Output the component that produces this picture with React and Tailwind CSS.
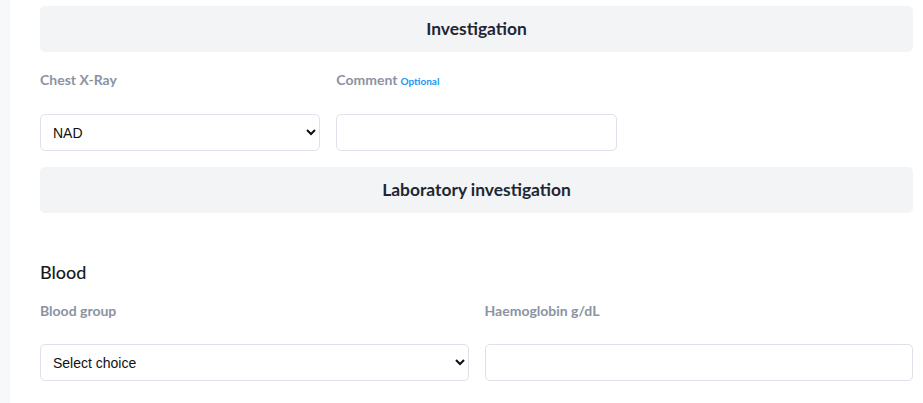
import { useState } from 'react'

const lato = { fontFamily: 'Lato, "Open Sans", sans-serif' }

function SectionHeader({ title }) {
  return (
    <div className="h-[46px] rounded-[5px] bg-[#f3f4f6] flex items-center justify-center">
      <h2 className="text-[17.4px] font-bold text-[#1f2633]" style={lato}>{title}</h2>
    </div>
  )
}

function Label({ children, optional }) {
  return (
    <label className="block h-[20px] leading-[20px] text-[14px] font-bold text-[#8a93a3]" style={lato}>
      {children}
      {optional && <span className="ml-[3px] text-[10px] font-bold text-[#2196f3]">Optional</span>}
    </label>
  )
}

const fieldCls =
  'w-full h-[37px] rounded-[5px] border border-[#dfe1ea] bg-white pl-2 text-[14px] text-[#111] outline-none'

export default function App() {
  const [xray, setXray] = useState('NAD')
  const [comment, setComment] = useState('')
  const [group, setGroup] = useState('')
  const [hb, setHb] = useState('')

  return (
    <div className="min-h-[403px] flex bg-white" style={{ fontFamily: '"Liberation Sans", Arial, sans-serif' }}>
      <div className="w-[10px] shrink-0 bg-[#f7f8fa]" />
      <div className="flex-1 pl-[30px] pr-[10px] pt-[6px]">
        <SectionHeader title="Investigation" />

        <div className="grid grid-cols-3 gap-x-4 mt-[18px]">
          <div>
            <Label>Chest X-Ray</Label>
            <select value={xray} onChange={(e) => setXray(e.target.value)} className={`${fieldCls} mt-[24px]`}>
              <option>NAD</option>
              <option>Abnormal</option>
            </select>
          </div>
          <div>
            <Label optional>Comment</Label>
            <input value={comment} onChange={(e) => setComment(e.target.value)} className={`${fieldCls} pl-3 mt-[24px]`} />
          </div>
        </div>

        <div className="mt-[16px]">
          <SectionHeader title="Laboratory investigation" />
        </div>

        <h3 className="mt-[46px] text-[18px] leading-[26px] font-medium text-[#161a22]" style={lato}>Blood</h3>

        <div className="grid grid-cols-2 gap-x-4 mt-[16px]">
          <div>
            <Label>Blood group</Label>
            <select value={group} onChange={(e) => setGroup(e.target.value)} className={`${fieldCls} mt-[23px]`}>
              <option value="">Select choice</option>
              <option>A+</option>
              <option>B+</option>
              <option>O+</option>
              <option>AB+</option>
            </select>
          </div>
          <div>
            <Label>Haemoglobin g/dL</Label>
            <input value={hb} onChange={(e) => setHb(e.target.value)} className={`${fieldCls} pl-3 mt-[23px]`} />
          </div>
        </div>
      </div>
    </div>
  )
}
